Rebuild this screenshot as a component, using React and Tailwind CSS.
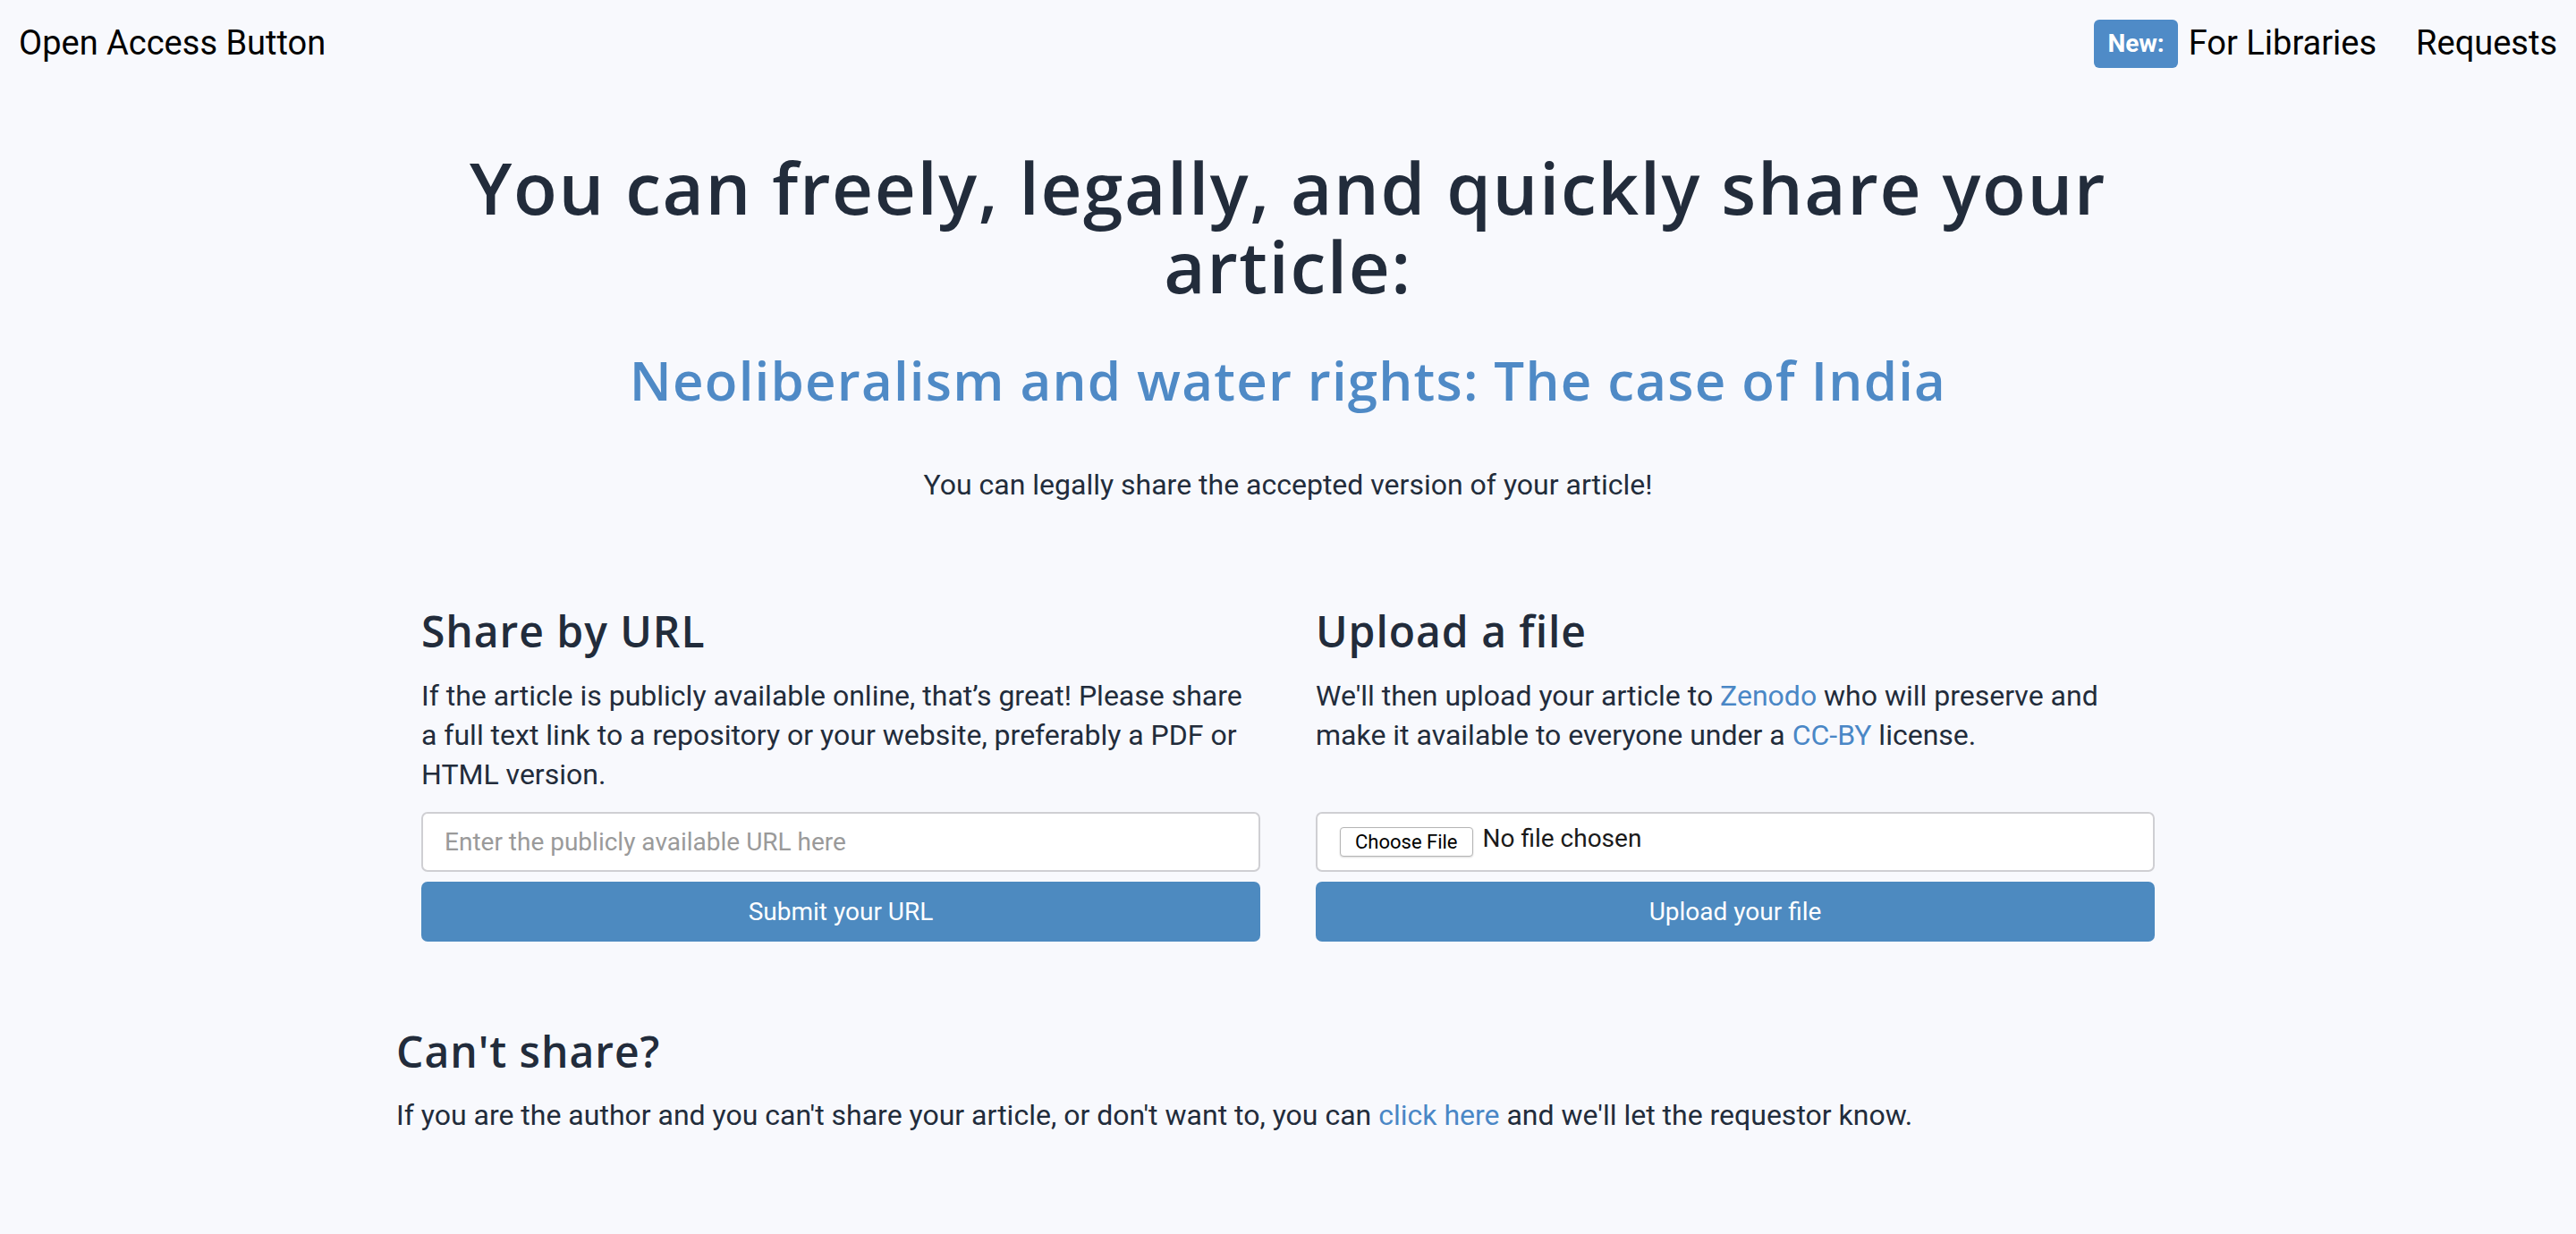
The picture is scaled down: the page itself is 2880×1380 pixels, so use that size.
import React from 'react'

const heading = "font-['Open_Sans',sans-serif] font-semibold tracking-[0.02em]"

function Nav() {
  return (
    <nav className="flex h-[97px] items-center justify-between px-[21px] font-['Roboto',sans-serif] text-[38px] leading-[1.2] text-black">
      <a href="#">Open Access Button</a>
      <div className="flex items-center">
        <span className="mr-[12px] flex h-[54px] items-center rounded-[6px] bg-[#4f8bc7] px-[15px] text-[28px] font-bold text-white">
          New:
        </span>
        <a href="#">For Libraries</a>
        <a href="#" className="ml-[44px]">Requests</a>
      </div>
    </nav>
  )
}

function ShareColumn({ title, children, field, action }) {
  return (
    <div className="flex flex-col">
      <h2 className={`${heading} text-[48px] leading-[58px] text-[#222c3b]`}>{title}</h2>
      <p className="mt-[21px] flex-1 text-[32px] leading-[44px]">{children}</p>
      <div className="mt-[20px]">{field}</div>
      <button className="mt-[11px] h-[67px] w-full rounded-[7px] bg-[#4d8ac0] text-[28px] text-white">
        {action}
      </button>
    </div>
  )
}

export default function App() {
  const link = 'text-[#4a87c6]'
  return (
    <div className="min-h-screen bg-[#f8f9fd] font-['Roboto',sans-serif] text-[#222c3b]">
      <Nav />
      <main className="mx-auto w-[1994px] pb-[100px]">
        <h1 className={`${heading} mx-auto mt-[68px] w-[1880px] text-center text-[80px] leading-[88px] text-[#222c3b]`}>
          You can freely, legally, and quickly share your article:
        </h1>
        <h2 className={`${heading} mt-[48px] text-center text-[60px] leading-[72px] text-[#4f8ac6]`}>
          Neoliberalism and water rights: The case of India
        </h2>
        <p className="mt-[59px] text-center text-[32px] leading-[44px]">
          You can legally share the accepted version of your article!
        </p>

        <div className="mt-[113px] grid grid-cols-2 gap-[62px] px-[28px]">
          <ShareColumn
            title="Share by URL"
            action="Submit your URL"
            field={
              <input
                type="text"
                placeholder="Enter the publicly available URL here"
                className="h-[67px] w-full rounded-[7px] border-2 border-[#cfcfd3] bg-white px-[24px] text-[28px] placeholder:text-[#9a9a9a] focus:outline-none"
              />
            }
          >
            If the article is publicly available online, that’s great! Please share a full text link to a
            repository or your website, preferably a PDF or HTML version.
          </ShareColumn>
          <ShareColumn
            title="Upload a file"
            action="Upload your file"
            field={
              <div className="flex h-[67px] w-full items-center rounded-[7px] border-2 border-[#cfcfd3] bg-white px-[25px]">
                <span className="flex h-[33px] items-center rounded-[4px] border border-[#b5b5b5] bg-white px-[16px] text-[22px] text-black shadow-[0_1px_2px_rgba(0,0,0,0.15)]">
                  Choose File
                </span>
                <span className="ml-[11px] -mt-[8px] text-[28px] text-[#1a1a1a]">No file chosen</span>
              </div>
            }
          >
            We'll then upload your article to <a href="#" className={link}>Zenodo</a> who will preserve and
            make it available to everyone under a <a href="#" className={link}>CC-BY</a> license.
          </ShareColumn>
        </div>

        <h2 className={`${heading} mt-[94px] text-[48px] leading-[58px] text-[#222c3b]`}>Can't share?</h2>
        <p className="mt-[20px] text-[32px] leading-[44px]">
          If you are the author and you can't share your article, or don't want to, you can{' '}
          <a href="#" className={link}>click here</a> and we'll let the requestor know.
        </p>
      </main>
    </div>
  )
}
